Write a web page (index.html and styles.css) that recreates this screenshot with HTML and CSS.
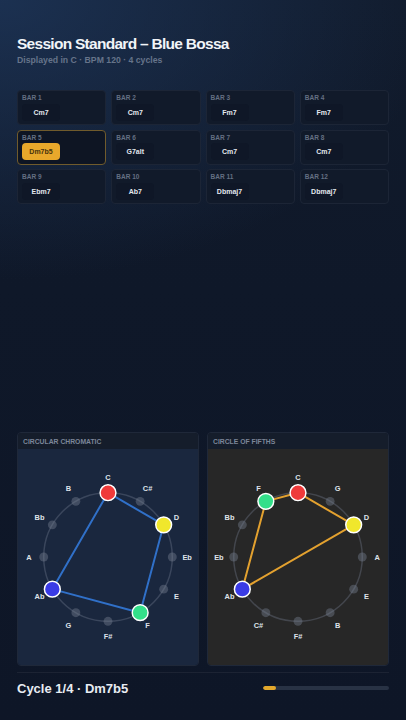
FILE: index.html
```html
<!DOCTYPE html>
<html lang="en">
<head>
<meta charset="utf-8">
<title>Session Standard – Blue Bossa</title>
<link rel="stylesheet" href="styles.css">
</head>
<body>
<div class="page">
  <header class="head">
    <h1 class="title">Session Standard – Blue Bossa</h1>
    <p class="sub">Displayed in C · BPM 120 · 4 cycles</p>
  </header>

  <section class="bars">
    <div class="bar"><span class="bar-label">BAR 1</span><span class="chord">Cm7</span></div>
    <div class="bar"><span class="bar-label">BAR 2</span><span class="chord">Cm7</span></div>
    <div class="bar"><span class="bar-label">BAR 3</span><span class="chord">Fm7</span></div>
    <div class="bar"><span class="bar-label">BAR 4</span><span class="chord">Fm7</span></div>
    <div class="bar bar-active"><span class="bar-label">BAR 5</span><span class="chord chord-active">Dm7b5</span></div>
    <div class="bar"><span class="bar-label">BAR 6</span><span class="chord">G7alt</span></div>
    <div class="bar"><span class="bar-label">BAR 7</span><span class="chord">Cm7</span></div>
    <div class="bar"><span class="bar-label">BAR 8</span><span class="chord">Cm7</span></div>
    <div class="bar"><span class="bar-label">BAR 9</span><span class="chord">Ebm7</span></div>
    <div class="bar"><span class="bar-label">BAR 10</span><span class="chord">Ab7</span></div>
    <div class="bar"><span class="bar-label">BAR 11</span><span class="chord">Dbmaj7</span></div>
    <div class="bar"><span class="bar-label">BAR 12</span><span class="chord">Dbmaj7</span></div>
  </section>

  <section class="panels">
    <div class="panel">
      <div class="panel-head">CIRCULAR CHROMATIC</div>
      <div class="panel-body panel-chromatic">
        <svg class="wheel" width="182" height="217" viewBox="0 0 182 217">
          <circle class="ring" cx="91" cy="108" r="65"/>
          <circle class="dot" cx="123.5" cy="51.71" r="4.5"/>
          <circle class="dot" cx="156" cy="108" r="4.5"/>
          <circle class="dot" cx="147.29" cy="140.5" r="4.5"/>
          <circle class="dot" cx="91" cy="173" r="4.5"/>
          <circle class="dot" cx="58.5" cy="164.29" r="4.5"/>
          <circle class="dot" cx="26" cy="108" r="4.5"/>
          <circle class="dot" cx="34.71" cy="75.5" r="4.5"/>
          <circle class="dot" cx="58.5" cy="51.71" r="4.5"/>
          <polygon class="shape shape-blue" points="91,43 147.29,75.5 123.5,164.29 34.71,140.5"/>
          <circle class="node n-red" cx="91" cy="43" r="8"/>
          <circle class="node n-yellow" cx="147.29" cy="75.5" r="8"/>
          <circle class="node n-green" cx="123.5" cy="164.29" r="8"/>
          <circle class="node n-blue" cx="34.71" cy="140.5" r="8"/>
          <text class="lbl" x="91" y="28">C</text>
          <text class="lbl" x="131" y="38.72">C#</text>
          <text class="lbl" x="160.28" y="68">D</text>
          <text class="lbl" x="171" y="108">Eb</text>
          <text class="lbl" x="160.28" y="148">E</text>
          <text class="lbl" x="131" y="177.28">F</text>
          <text class="lbl" x="91" y="188">F#</text>
          <text class="lbl" x="51" y="177.28">G</text>
          <text class="lbl" x="21.72" y="148">Ab</text>
          <text class="lbl" x="11" y="108">A</text>
          <text class="lbl" x="21.72" y="68">Bb</text>
          <text class="lbl" x="51" y="38.72">B</text>
        </svg>
      </div>
    </div>
    <div class="panel">
      <div class="panel-head">CIRCLE OF FIFTHS</div>
      <div class="panel-body panel-fifths">
        <svg class="wheel" width="182" height="217" viewBox="0 0 182 217">
          <circle class="ring" cx="91" cy="108" r="65"/>
          <circle class="dot" cx="123.5" cy="51.71" r="4.5"/>
          <circle class="dot" cx="156" cy="108" r="4.5"/>
          <circle class="dot" cx="147.29" cy="140.5" r="4.5"/>
          <circle class="dot" cx="123.5" cy="164.29" r="4.5"/>
          <circle class="dot" cx="91" cy="173" r="4.5"/>
          <circle class="dot" cx="58.5" cy="164.29" r="4.5"/>
          <circle class="dot" cx="26" cy="108" r="4.5"/>
          <circle class="dot" cx="34.71" cy="75.5" r="4.5"/>
          <polygon class="shape shape-gold" points="91,43 147.29,75.5 34.71,140.5 58.5,51.71"/>
          <circle class="node n-red" cx="91" cy="43" r="8"/>
          <circle class="node n-yellow" cx="147.29" cy="75.5" r="8"/>
          <circle class="node n-blue" cx="34.71" cy="140.5" r="8"/>
          <circle class="node n-green" cx="58.5" cy="51.71" r="8"/>
          <text class="lbl" x="91" y="28">C</text>
          <text class="lbl" x="131" y="38.72">G</text>
          <text class="lbl" x="160.28" y="68">D</text>
          <text class="lbl" x="171" y="108">A</text>
          <text class="lbl" x="160.28" y="148">E</text>
          <text class="lbl" x="131" y="177.28">B</text>
          <text class="lbl" x="91" y="188">F#</text>
          <text class="lbl" x="51" y="177.28">C#</text>
          <text class="lbl" x="21.72" y="148">Ab</text>
          <text class="lbl" x="11" y="108">Eb</text>
          <text class="lbl" x="21.72" y="68">Bb</text>
          <text class="lbl" x="51" y="38.72">F</text>
        </svg>
      </div>
    </div>
  </section>

  <footer class="foot">
    <div class="foot-text">Cycle 1/4 · Dm7b5</div>
    <div class="progress"><div class="progress-fill"></div></div>
  </footer>
</div>
</body>
</html>
```

FILE: styles.css
```css
* { box-sizing: border-box; }

html, body {
  margin: 0;
  padding: 0;
}

body {
  width: 406px;
  height: 720px;
  overflow: hidden;
  font-family: "Liberation Sans", Arial, sans-serif;
  color: #e6eaf1;
  background: #0e1627;
}

.page {
  width: 406px;
  height: 720px;
  display: flex;
  flex-direction: column;
  padding: 34px 17px 0;
  background:
    radial-gradient(ellipse 440px 280px at 0% 0%, rgba(30, 54, 90, 0.8), rgba(30, 54, 90, 0) 100%),
    linear-gradient(180deg, #111b2c 0%, #0f1829 40%, #0e1627 100%);
}

.title {
  margin: 0;
  font-size: 15.5px;
  line-height: 19px;
  font-weight: 700;
  letter-spacing: -0.72px;
  color: #f1f4f8;
}

.sub {
  margin: 2px 0 0;
  font-size: 8.7px;
  line-height: 11px;
  font-weight: 700;
  color: #66748a;
}

.bars {
  margin-top: 24px;
  display: grid;
  grid-template-columns: repeat(4, 1fr);
  column-gap: 5px;
  row-gap: 4.5px;
}

.bar {
  display: flex;
  flex-direction: column;
  align-items: flex-start;
  height: 35px;
  padding: 3px 4px 0;
  border: 1px solid #1c2536;
  border-radius: 4px;
  background: #111a2a;
}

.bar-active {
  border-color: #705b2c;
  background: #0e1523;
}

.bar-label {
  font-size: 6.5px;
  line-height: 8px;
  font-weight: 700;
  color: #646f82;
}

.chord {
  margin-top: 1.5px;
  min-width: 38px;
  height: 17px;
  padding: 0 5px;
  display: flex;
  align-items: center;
  justify-content: center;
  border-radius: 4px;
  background: #0f1727;
  font-size: 7px;
  font-weight: 700;
  color: #e3e7ee;
}

.chord-active {
  background: #e8a82b;
  color: #47330d;
}

.panels {
  margin-top: auto;
  display: grid;
  grid-template-columns: 1fr 1fr;
  column-gap: 8px;
}

.panel {
  border: 1px solid #1f2839;
  border-radius: 4px;
  overflow: hidden;
}

.panel-head {
  height: 16px;
  padding: 0 5px;
  display: flex;
  align-items: center;
  background: #151d2b;
  font-size: 6.8px;
  font-weight: 700;
  color: #7c8699;
}

.panel-body {
  height: 216px;
  display: flex;
  justify-content: center;
  align-items: center;
}

.panel-chromatic { background: #1a273e; }
.panel-fifths { background: #272727; }

.wheel { display: block; }

.ring {
  fill: none;
  stroke: rgba(120, 130, 150, 0.35);
  stroke-width: 1.5;
}

.dot { fill: rgba(120, 128, 145, 0.42); }

.shape {
  fill: none;
  stroke-width: 2;
  stroke-linejoin: round;
}
.shape-blue { stroke: #3070c8; }
.shape-gold { stroke: #e3a12f; }

.node {
  stroke: #ffffff;
  stroke-width: 1.5;
}
.n-red { fill: #ef3a3a; }
.n-yellow { fill: #f0e72c; }
.n-green { fill: #33df8a; }
.n-blue { fill: #3a3be6; }

.lbl {
  font-family: "Liberation Sans", Arial, sans-serif;
  font-size: 7.5px;
  font-weight: 700;
  fill: #dfe3ea;
  text-anchor: middle;
  dominant-baseline: central;
}

.foot {
  margin-top: 6px;
  height: 48px;
  border-top: 1px solid rgba(255, 255, 255, 0.06);
  padding-bottom: 17px;
  display: flex;
  align-items: center;
  justify-content: space-between;
}

.foot-text {
  font-size: 13px;
  font-weight: 700;
  color: #e8ecf2;
}

.progress {
  width: 126px;
  height: 4px;
  border-radius: 2px;
  background: #283244;
  overflow: hidden;
}

.progress-fill {
  width: 10%;
  height: 100%;
  border-radius: 2px;
  background: #e3a82c;
}
```
